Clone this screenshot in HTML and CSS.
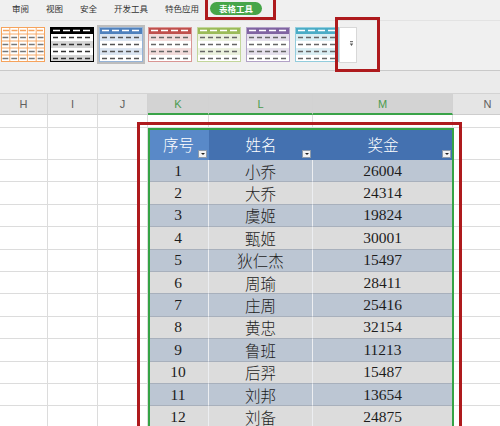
FILE: index.html
```html
<!DOCTYPE html>
<html lang="zh">
<head>
<meta charset="utf-8">
<link rel="stylesheet" href="styles.css">
</head>
<body>
<div class="app">
  <div class="menubar">
    <span class="mi">审阅</span>
    <span class="mi">视图</span>
    <span class="mi">安全</span>
    <span class="mi">开发工具</span>
    <span class="mi">特色应用</span>
    <span class="pill">表格工具</span>
  </div>

  <div class="ribbon">
    <div class="gallery">
      <svg class="thumb" viewBox="0 0 44 35">
        <rect width="44" height="35" fill="#fff"/>
        <line x1="2" y1="3.5" x2="43" y2="3.5" stroke="#f4a460" stroke-width="1.5" stroke-dasharray="6 2.5"/>
        <g stroke="#f6a35c" stroke-width="0.9">
          <line x1="0" y1="7" x2="44" y2="7"/><line x1="0" y1="14" x2="44" y2="14"/>
          <line x1="0" y1="21" x2="44" y2="21"/><line x1="0" y1="28" x2="44" y2="28"/>
          <line x1="8.8" y1="0" x2="8.8" y2="35"/><line x1="17.6" y1="0" x2="17.6" y2="35"/>
          <line x1="26.4" y1="0" x2="26.4" y2="35"/><line x1="35.2" y1="0" x2="35.2" y2="35"/>
        </g>
        <g stroke="#777" stroke-width="1.4" stroke-dasharray="5.8 3" stroke-dashoffset="-1.5">
          <line x1="0" y1="10.5" x2="44" y2="10.5"/><line x1="0" y1="17.5" x2="44" y2="17.5"/>
          <line x1="0" y1="24.5" x2="44" y2="24.5"/><line x1="0" y1="31.5" x2="44" y2="31.5"/>
        </g>
        <rect x="0.5" y="0.5" width="43" height="34" fill="none" stroke="#f6a35c"/>
      </svg>

      <svg class="thumb" viewBox="0 0 44 35">
        <rect width="44" height="35" fill="#fff"/>
        <rect y="14" width="44" height="7" fill="#d6d6d6"/>
        <rect y="28" width="44" height="7" fill="#d6d6d6"/>
        <rect width="44" height="7" fill="#000"/>
        <line x1="3" y1="3.5" x2="43" y2="3.5" stroke="#fff" stroke-width="1.5" stroke-dasharray="7 3"/>
        <g stroke="#333" stroke-width="1.4" stroke-dasharray="5 3">
          <line x1="3" y1="10.5" x2="43" y2="10.5"/><line x1="3" y1="17.5" x2="43" y2="17.5"/>
          <line x1="3" y1="24.5" x2="43" y2="24.5"/><line x1="3" y1="31.5" x2="43" y2="31.5"/>
        </g>
        <rect x="0.5" y="0.5" width="43" height="34" fill="none" stroke="#000"/>
      </svg>

      <div class="tsel">
        <svg class="thumb" viewBox="0 0 44 35">
          <rect width="44" height="35" fill="#fff"/>
          <rect y="7" width="44" height="7" fill="#dbe5f1"/>
          <rect y="21" width="44" height="7" fill="#dbe5f1"/>
          <rect width="44" height="7" fill="#4f81bd"/>
          <line x1="3" y1="3.5" x2="43" y2="3.5" stroke="#fff" stroke-width="1.5" stroke-dasharray="7 3"/>
          <g stroke="#555" stroke-width="1.4" stroke-dasharray="5 3">
            <line x1="3" y1="10.5" x2="43" y2="10.5"/><line x1="3" y1="17.5" x2="43" y2="17.5"/>
            <line x1="3" y1="24.5" x2="43" y2="24.5"/><line x1="3" y1="31.5" x2="43" y2="31.5"/>
          </g>
          <rect x="0.5" y="0.5" width="43" height="34" fill="none" stroke="#95b3d7"/>
        </svg>
      </div>

      <svg class="thumb" viewBox="0 0 44 35">
        <rect width="44" height="35" fill="#fff"/>
        <rect y="7" width="44" height="7" fill="#f2dcdb"/>
        <rect y="21" width="44" height="7" fill="#f2dcdb"/>
        <rect width="44" height="7" fill="#c0504d"/>
        <line x1="3" y1="3.5" x2="43" y2="3.5" stroke="#fff" stroke-width="1.5" stroke-dasharray="7 3"/>
        <g stroke="#666" stroke-width="1.4" stroke-dasharray="5 3">
          <line x1="3" y1="10.5" x2="43" y2="10.5"/><line x1="3" y1="17.5" x2="43" y2="17.5"/>
          <line x1="3" y1="24.5" x2="43" y2="24.5"/><line x1="3" y1="31.5" x2="43" y2="31.5"/>
        </g>
        <rect x="0.5" y="0.5" width="43" height="34" fill="none" stroke="#d99694"/>
      </svg>

      <svg class="thumb" viewBox="0 0 44 35">
        <rect width="44" height="35" fill="#fff"/>
        <rect y="7" width="44" height="7" fill="#ebf1de"/>
        <rect y="21" width="44" height="7" fill="#ebf1de"/>
        <rect width="44" height="7" fill="#9bbb59"/>
        <line x1="3" y1="3.5" x2="43" y2="3.5" stroke="#fff" stroke-width="1.5" stroke-dasharray="7 3"/>
        <g stroke="#666" stroke-width="1.4" stroke-dasharray="5 3">
          <line x1="3" y1="10.5" x2="43" y2="10.5"/><line x1="3" y1="17.5" x2="43" y2="17.5"/>
          <line x1="3" y1="24.5" x2="43" y2="24.5"/><line x1="3" y1="31.5" x2="43" y2="31.5"/>
        </g>
        <rect x="0.5" y="0.5" width="43" height="34" fill="none" stroke="#c3d69b"/>
      </svg>

      <svg class="thumb" viewBox="0 0 44 35">
        <rect width="44" height="35" fill="#fff"/>
        <rect y="7" width="44" height="7" fill="#e5e0ec"/>
        <rect y="21" width="44" height="7" fill="#e5e0ec"/>
        <rect width="44" height="7" fill="#8064a2"/>
        <line x1="3" y1="3.5" x2="43" y2="3.5" stroke="#fff" stroke-width="1.5" stroke-dasharray="7 3"/>
        <g stroke="#666" stroke-width="1.4" stroke-dasharray="5 3">
          <line x1="3" y1="10.5" x2="43" y2="10.5"/><line x1="3" y1="17.5" x2="43" y2="17.5"/>
          <line x1="3" y1="24.5" x2="43" y2="24.5"/><line x1="3" y1="31.5" x2="43" y2="31.5"/>
        </g>
        <rect x="0.5" y="0.5" width="43" height="34" fill="none" stroke="#b2a2c7"/>
      </svg>

      <svg class="thumb" viewBox="0 0 44 35">
        <rect width="44" height="35" fill="#fff"/>
        <rect y="7" width="44" height="7" fill="#daeef3"/>
        <rect y="21" width="44" height="7" fill="#daeef3"/>
        <rect width="44" height="7" fill="#4bacc6"/>
        <line x1="3" y1="3.5" x2="43" y2="3.5" stroke="#fff" stroke-width="1.5" stroke-dasharray="7 3"/>
        <g stroke="#666" stroke-width="1.4" stroke-dasharray="5 3">
          <line x1="3" y1="10.5" x2="43" y2="10.5"/><line x1="3" y1="17.5" x2="43" y2="17.5"/>
          <line x1="3" y1="24.5" x2="43" y2="24.5"/><line x1="3" y1="31.5" x2="43" y2="31.5"/>
        </g>
        <rect x="0.5" y="0.5" width="43" height="34" fill="none" stroke="#93cddd"/>
      </svg>
    </div>
    <div class="more">
      <svg class="more-ic" viewBox="0 0 5 6" width="5" height="6">
        <line x1="1" y1="0.7" x2="4" y2="0.7" stroke="#555" stroke-width="1"/>
        <path d="M0.8 2.4 H4.2 L2.5 5 Z" fill="#555"/>
      </svg>
    </div>
  </div>

  <div class="formula"></div>

  <div class="sheet">
    <div class="h">H</div><div class="h">I</div><div class="h">J</div>
    <div class="h sel">K</div><div class="h sel">L</div><div class="h sel">M</div><div class="h">N</div>

    <div class="c"></div><div class="c"></div><div class="c"></div><div class="c"></div><div class="c"></div><div class="c"></div><div class="c"></div>

    <div class="c"></div><div class="c"></div><div class="c"></div>
    <div class="th k">序号<span class="flt"></span></div>
    <div class="th">姓名<span class="flt"></span></div>
    <div class="th">奖金<span class="flt"></span></div>
    <div class="c"></div>

    <div class="c"></div><div class="c"></div><div class="c"></div><div class="td o">1</div><div class="td o">小乔</div><div class="td o">26004</div><div class="c"></div>
    <div class="c"></div><div class="c"></div><div class="c"></div><div class="td e">2</div><div class="td e">大乔</div><div class="td e">24314</div><div class="c"></div>
    <div class="c"></div><div class="c"></div><div class="c"></div><div class="td o">3</div><div class="td o">虞姬</div><div class="td o">19824</div><div class="c"></div>
    <div class="c"></div><div class="c"></div><div class="c"></div><div class="td e">4</div><div class="td e">甄姬</div><div class="td e">30001</div><div class="c"></div>
    <div class="c"></div><div class="c"></div><div class="c"></div><div class="td o">5</div><div class="td o">狄仁杰</div><div class="td o">15497</div><div class="c"></div>
    <div class="c"></div><div class="c"></div><div class="c"></div><div class="td e">6</div><div class="td e">周瑜</div><div class="td e">28411</div><div class="c"></div>
    <div class="c"></div><div class="c"></div><div class="c"></div><div class="td o">7</div><div class="td o">庄周</div><div class="td o">25416</div><div class="c"></div>
    <div class="c"></div><div class="c"></div><div class="c"></div><div class="td e">8</div><div class="td e">黄忠</div><div class="td e">32154</div><div class="c"></div>
    <div class="c"></div><div class="c"></div><div class="c"></div><div class="td o">9</div><div class="td o">鲁班</div><div class="td o">11213</div><div class="c"></div>
    <div class="c"></div><div class="c"></div><div class="c"></div><div class="td e">10</div><div class="td e">后羿</div><div class="td e">15487</div><div class="c"></div>
    <div class="c"></div><div class="c"></div><div class="c"></div><div class="td o">11</div><div class="td o">刘邦</div><div class="td o">13654</div><div class="c"></div>
    <div class="c"></div><div class="c"></div><div class="c"></div><div class="td e">12</div><div class="td e">刘备</div><div class="td e">24875</div><div class="c"></div>
  </div>

  <div class="selbox"></div>
  <div class="mark mark-tab"></div>
  <div class="mark mark-more"></div>
  <div class="mark mark-table"></div>
</div>
</body>
</html>
```

FILE: styles.css
```css
* { box-sizing: border-box; margin: 0; padding: 0; }

html, body { width: 500px; height: 426px; overflow: hidden; background: #fff; }

.app {
  position: relative;
  width: 500px;
  height: 426px;
  overflow: hidden;
  font-family: "Noto Sans CJK SC", sans-serif;
}

.menubar {
  height: 21px;
  background: #f0f0f0;
  display: flex;
  align-items: flex-start;
  padding: 2px 0 0 12px;
  gap: 17px;
  border-bottom: 1px solid #e3e3e3;
}

.mi {
  font-size: 8.5px;
  line-height: 13px;
  color: #333;
}

.pill {
  margin-left: -6px;
  height: 13px;
  line-height: 13px;
  padding: 0 9px;
  border-radius: 7px;
  background: #46a548;
  color: #fff;
  font-size: 8.5px;
  font-weight: bold;
}

.ribbon {
  height: 50px;
  background: #f0f0f0;
  border-bottom: 1px solid #c9c9c9;
  display: flex;
  align-items: flex-start;
  padding: 6px 0 0 1px;
}

.gallery {
  display: flex;
  gap: 5px;
}

.thumb {
  display: block;
  width: 44px;
  height: 35px;
}

.tsel {
  background: #bdbdbd;
  box-shadow: 0 0 0 2px #bdbdbd;
}

.more {
  width: 18px;
  height: 36px;
  background: #fff;
  border: 1px solid #d8d8d8;
  display: flex;
  justify-content: flex-end;
  align-items: flex-start;
  padding: 13px 2px 0 0;
}

.more-ic { display: block; }

.formula {
  height: 23px;
  background: #ebebeb;
  border-bottom: 1px solid #d3d3d3;
}

.sheet {
  display: grid;
  grid-template-columns: 48px 50px 50px 61px 104px 140px 70px;
  grid-template-rows: 21px 13px 32px repeat(12, 22.4px);
  width: 523px;
}

.c {
  border-right: 1px solid #dcdcdc;
  border-bottom: 1px solid #dcdcdc;
}

.h {
  background: #e5e5e5;
  border-right: 1px solid #d2d2d2;
  border-bottom: 1px solid #cdcdcd;
  font-family: "Liberation Sans", sans-serif;
  font-size: 11px;
  color: #606060;
  display: flex;
  align-items: center;
  justify-content: center;
}

.h.sel {
  background: #d3d3d3;
  color: #4b9b4e;
  border-bottom: 2px solid #3aa348;
}

.th {
  position: relative;
  background: #4471b0;
  color: #fff;
  font-family: "Liberation Serif", "Noto Sans CJK SC", serif;
  font-size: 15.5px;
  font-weight: 300;
  display: flex;
  align-items: center;
  justify-content: center;
}

.th.k { background: #5989c8; }

.flt {
  position: absolute;
  right: 2px;
  bottom: 2px;
  width: 9px;
  height: 8px;
  background: #f2f2f2;
  border: 1px solid #8e9bab;
}

.flt::after {
  content: "";
  position: absolute;
  left: 2px;
  top: 2px;
  border-left: 2px solid transparent;
  border-right: 2px solid transparent;
  border-top: 2px solid #222;
}

.td {
  font-family: "Liberation Serif", "Noto Sans CJK SC", serif;
  font-size: 15.5px;
  font-weight: 300;
  color: #1c1c1c;
  display: flex;
  align-items: center;
  justify-content: center;
  border-right: 1px solid #eceef1;
  border-bottom: 1px solid #a8b0bc;
}

.td.o { background: #bcc6d3; }
.td.e { background: #dcdcdc; }

.selbox {
  position: absolute;
  left: 148px;
  top: 128px;
  width: 306px;
  height: 320px;
  border: 2px solid #35a346;
  pointer-events: none;
}

.mark {
  position: absolute;
  border: 3px solid #ae1a1d;
  pointer-events: none;
}

.mark-tab { left: 205px; top: -4px; width: 71px; height: 24px; }
.mark-more { left: 335px; top: 17px; width: 45px; height: 55px; }
.mark-table { left: 137px; top: 122px; width: 325px; height: 330px; border-width: 3.5px; }
```
